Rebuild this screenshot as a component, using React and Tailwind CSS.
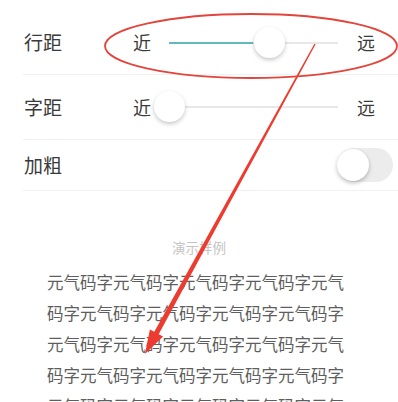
import React from "react";

const font = { fontFamily: '"Noto Sans CJK SC", "Noto Sans", sans-serif' };

function Slider({ thumb, fill }) {
  return (
    <div className="relative h-[34px] w-[206px]">
      <div className="absolute left-[18px] top-[16px] h-[2px] w-[169px] bg-[#e8e8e8]" />
      {fill > 0 && (
        <div
          className="absolute left-[18px] top-[16px] h-[2px] bg-[#62b8bd]"
          style={{ width: fill }}
        />
      )}
      <div
        className="absolute top-[1px] h-[31px] w-[31px] rounded-full bg-white shadow-[0_2px_4px_rgba(0,0,0,0.22)]"
        style={{ left: thumb - 15.5 }}
      />
    </div>
  );
}

function SliderRow({ label, thumb, fill, className }) {
  return (
    <div className={`flex items-center border-b border-[#f1f1f1] pl-[1px] pr-[23px] ${className}`}>
      <span className="w-[109px] text-[19px] text-[#3a3a3a]">{label}</span>
      <span className="w-[18px] text-[18px] text-[#3a3a3a]">近</span>
      <Slider thumb={thumb} fill={fill} />
      <span className="w-[18px] text-[18px] text-[#3a3a3a]">远</span>
    </div>
  );
}

export default function App() {
  const sample = "元气码字".repeat(30);
  return (
    <div className="relative h-[402px] w-[398px] overflow-hidden bg-white" style={font}>
      <div className="ml-[23px] pt-[11px]">
        <SliderRow label="行距" thumb={118} fill={84} className="h-[64px]" />
        <SliderRow label="字距" thumb={18} fill={0} className="h-[65px]" />
        <div className="flex h-[51px] items-center justify-between border-b border-[#f1f1f1] pl-[1px] pr-[5px]">
          <span className="text-[19px] text-[#3a3a3a]">加粗</span>
          <div className="relative h-[34px] w-[56px] rounded-full bg-[#ececec]">
            <div className="absolute left-[0px] top-[1px] h-[32px] w-[32px] rounded-full bg-white shadow-[0_2px_4px_rgba(0,0,0,0.25)]" />
          </div>
        </div>
      </div>

      <p className="mt-[46px] text-center text-[13.5px] leading-[20px] text-[#c4c4c4]">演示样例</p>

      <p className="ml-[47px] mt-[10px] w-[298px] break-all text-[16.5px] leading-[31px] text-[#5e5e5e]">
        {sample}
      </p>

      <svg className="pointer-events-none absolute inset-0" width="398" height="402" viewBox="0 0 398 402">
        <ellipse cx="251" cy="46" rx="146" ry="32" fill="none" stroke="#e2453c" strokeWidth="1.8" />
        <polygon
          points="314.4,43.7 315.6,44.3 158.7,334.2 163.1,336.6 145,354 149.9,329.4 154.3,331.8"
          fill="#ee3b30"
        />
      </svg>
    </div>
  );
}
